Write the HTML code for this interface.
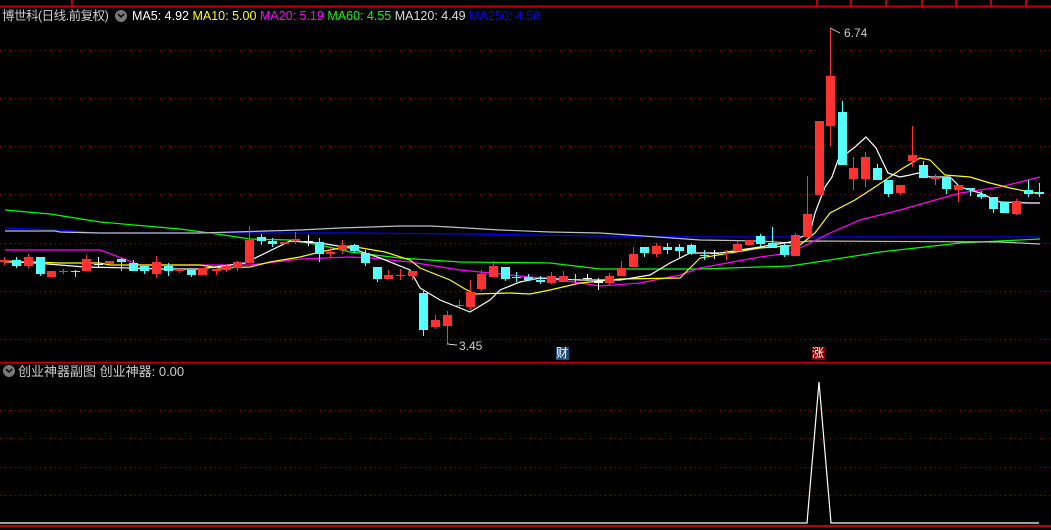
<!DOCTYPE html>
<html><head><meta charset="utf-8"><style>
html,body{margin:0;padding:0;background:#000;width:1051px;height:530px;overflow:hidden}
body{position:relative;font-family:"Liberation Sans","Noto Sans CJK SC",sans-serif}
.t{position:absolute;font-size:13px;white-space:nowrap;line-height:15px}
</style></head><body>
<svg id="s" width="1051" height="530" style="position:absolute;left:0;top:0" shape-rendering="crispEdges">
<line x1="0" y1="6.5" x2="1051" y2="6.5" stroke="#c00000" stroke-width="2"/>
<g stroke="#c00000" stroke-width="2">
<line x1="72" y1="0" x2="72" y2="6"/><line x1="817" y1="0" x2="817" y2="6"/><line x1="851" y1="0" x2="851" y2="6"/><line x1="886" y1="0" x2="886" y2="6"/><line x1="922" y1="0" x2="922" y2="6"/><line x1="956" y1="0" x2="956" y2="6"/><line x1="991" y1="0" x2="991" y2="6"/><line x1="1026" y1="0" x2="1026" y2="6"/>
</g>
<g stroke="#8a0000" stroke-width="1" stroke-dasharray="1,4">
<line x1="0" y1="50.5" x2="1051" y2="50.5"/><line x1="0" y1="98.5" x2="1051" y2="98.5"/><line x1="0" y1="146.5" x2="1051" y2="146.5"/><line x1="0" y1="194.5" x2="1051" y2="194.5"/><line x1="0" y1="243.5" x2="1051" y2="243.5"/><line x1="0" y1="291.5" x2="1051" y2="291.5"/><line x1="0" y1="339.5" x2="1051" y2="339.5"/>
<line x1="0" y1="410.5" x2="1051" y2="410.5"/><line x1="0" y1="438.5" x2="1051" y2="438.5"/><line x1="0" y1="467.5" x2="1051" y2="467.5"/><line x1="0" y1="495.5" x2="1051" y2="495.5"/>
</g>
<line x1="0" y1="362.5" x2="1051" y2="362.5" stroke="#c00000" stroke-width="1"/>
<line x1="0" y1="526" x2="1051" y2="526" stroke="#c00000" stroke-width="2"/>
<polyline fill="none" stroke="#fff" stroke-width="1.2" shape-rendering="auto" points="0,523 807,523 819,382 831,523 1039,523"/>
<g id="ma" fill="none" stroke-width="1.2" shape-rendering="auto">
<polyline stroke="#00ff00" points="5,210 50,214 100,222 180,229 210,233 250,239 290,240 320,245 350,252 400,258 460,262 550,263 600,269 700,269 790,266 830,260 880,252 960,243 1040,239"/>
<polyline stroke="#0000ff" points="5,228 60,230 100,233 350,233 470,234 600,236 700,237 1039,237"/>
<polyline stroke="#c0c0c0" points="5,231 55,231 60,232 100,233 200,233 300,230 340,228 400,226 430,226 450,227 500,230 550,232 600,233 700,240 760,241 790,243 810,241 1000,242 1040,244"/>
<polyline stroke="#ff00ff" points="5,250 100,250 140,265 250,265 300,259 350,257 370,258 410,262 460,270 510,275 560,280 600,286 640,283 680,275 700,268 760,257 790,253 830,233 860,220 900,210 960,193 1000,187 1040,177"/>
<polyline stroke="#ffff00" points="5,262 35,262 60,263 100,263 110,265 200,265 220,268 250,267 270,262 300,257 320,252 350,246 385,252 410,260 420,268 450,280 465,289 475,294 510,293 530,294 550,290 580,283 620,279 680,278 700,258 760,248 800,245 815,233 830,213 855,200 875,187 900,170 920,158 930,160 945,175 970,177 990,183 1010,188 1040,194"/>
<polyline stroke="#ffffff" points="5,261 35,263 60,265 85,267 130,268 160,269 200,269 245,263 290,241 320,243 350,248 380,258 410,270 420,288 440,300 470,312 490,300 500,290 520,282 540,278 580,280 620,280 650,275 670,263 690,253 720,253 760,247 790,242 810,233 815,213 825,187 832,177 838,160 855,147 866,137 876,148 888,173 900,177 910,175 918,173 930,177 950,177 960,187 980,193 1000,202 1030,203 1040,203"/>
</g>
<g id="cd"></g>
<line x1="830" y1="28" x2="840" y2="33" stroke="#ccc"/>
<line x1="447" y1="344" x2="457" y2="345" stroke="#ccc"/>
<rect x="556" y="347" width="13" height="13" fill="#1c4d7c"/>
<rect x="812" y="347" width="13" height="13" fill="#8a0000"/>
<circle cx="9" cy="371" r="6" fill="#777"/>
<circle cx="121" cy="16" r="6" fill="#777"/>
<polyline points="6,369 9,372 12,369" fill="none" stroke="#000" stroke-width="1.5" shape-rendering="auto"/>
<polyline points="118,14 121,17 124,14" fill="none" stroke="#000" stroke-width="1.5" shape-rendering="auto"/>
</svg>
<div class="t" style="left:2px;top:9px;color:#d0d0d0;font-size:12.5px;letter-spacing:-0.5px">博世科(日线.前复权)</div>
<div class="t" style="left:132px;top:9px;font-size:12.5px"><span style="color:#fff">MA5: 4.92</span> <span style="color:#ff0">MA10: 5.00</span> <span style="color:#f0f">MA20: 5.19</span> <span style="color:#0f0">MA60: 4.55</span> <span style="color:#ddd">MA120: 4.49</span> <span style="color:#00f">MA250: 4.56</span></div>
<div class="t" style="left:844px;top:26px;color:#ccc;font-size:12px">6.74</div>
<div class="t" style="left:459px;top:339px;color:#ccc;font-size:12px">3.45</div>
<div class="t" style="left:556px;top:346px;color:#fff;font-size:12px">财</div>
<div class="t" style="left:812px;top:346px;color:#fff;font-size:12px">涨</div>
<div class="t" style="left:18px;top:364px;color:#ccc;font-size:13px">创业神器副图 创业神器: 0.00</div>
<script>
var R="#ff3232",C="#54ffff",W="#ffffff";
var d=[[0,260,262,257,265,R],[12,260,266,257,268,C],[24,257,266,254,268,R],[36,257,274,257,276,C],[47,271,277,271,277,R],[59,271,272,269,274,R],[71,271,271,270,277,C],[82,259,271,255,271,R],[94,264,264,257,267,W],[105,261,264,261,264,R],[117,259,262,258,271,C],[129,263,271,260,271,C],[140,266,271,266,274,C],[152,262,274,256,278,R],[164,266,271,263,276,C],[175,269,271,269,273,R],[187,270,275,270,277,C],[198,268,275,268,275,R],[212,269,271,267,275,R],[222,266,270,264,272,R],[233,262,268,261,271,R],[245,240,263,226,263,R],[257,237,241,234,245,C],[268,241,244,238,247,C],[280,242,244,242,244,R],[291,239,241,232,244,R],[304,241,241,235,246,W],[315,242,254,238,262,C],[326,252,254,248,258,R],[338,245,250,240,254,R],[350,245,251,244,253,C],[361,253,263,250,266,C],[373,267,279,267,282,C],[384,275,279,270,279,R],[396,275,275,269,280,R],[408,271,276,271,280,R],[419,293,330,291,336,C],[431,320,327,315,329,R],[443,315,326,311,344,R],[455,305,306,300,307,R],[466,292,307,280,310,R],[477,274,289,270,291,R],[489,266,277,261,277,R],[501,267,279,267,281,C],[512,277,277,272,282,C],[524,277,280,274,281,C],[536,280,282,276,284,C],[547,276,283,272,284,R],[559,276,282,271,282,R],[571,279,279,274,283,C],[583,278,278,274,281,W],[594,281,283,278,290,W],[605,276,283,273,286,R],[617,268,276,261,276,R],[629,254,267,247,267,R],[640,247,253,247,257,C],[652,246,254,243,257,R],[663,247,250,243,254,C],[675,247,251,244,259,C],[687,245,253,244,255,C],[700,255,255,250,260,C],[710,253,253,250,259,W],[722,253,253,250,260,R],[733,244,251,241,251,R],[745,240,245,240,245,R],[756,236,244,234,247,C],[768,243,248,227,248,C],[780,245,255,243,257,C],[791,235,256,233,256,R],[803,214,237,176,237,R],[815,121,195,121,195,R],[826,76,126,28,146,R],[838,112,165,101,165,C],[849,168,179,157,190,R],[861,157,179,152,187,R],[873,168,180,164,180,C],[884,180,194,180,197,C],[896,185,193,185,195,R],[908,155,161,126,167,R],[919,165,178,161,178,C],[931,177,179,174,185,R],[942,177,189,177,194,C],[954,185,190,185,202,R],[966,188,190,188,196,C],[977,194,197,191,199,C],[989,197,209,197,213,C],[1000,202,213,202,213,C],[1012,201,214,199,215,R],[1024,190,194,180,197,C],[1035,192,194,183,197,C]];
var g=document.getElementById("cd"),h="";
d.forEach(function(c){var x=c[0],cx=x+4.5;h+='<line x1="'+cx+'" y1="'+c[3]+'" x2="'+cx+'" y2="'+c[4]+'" stroke="'+c[5]+'"/>';var hh=Math.max(1,c[2]-c[1]);h+='<rect x="'+x+'" y="'+c[1]+'" width="9" height="'+hh+'" fill="'+c[5]+'"/>';});
g.innerHTML=h;
</script>
</body></html>
